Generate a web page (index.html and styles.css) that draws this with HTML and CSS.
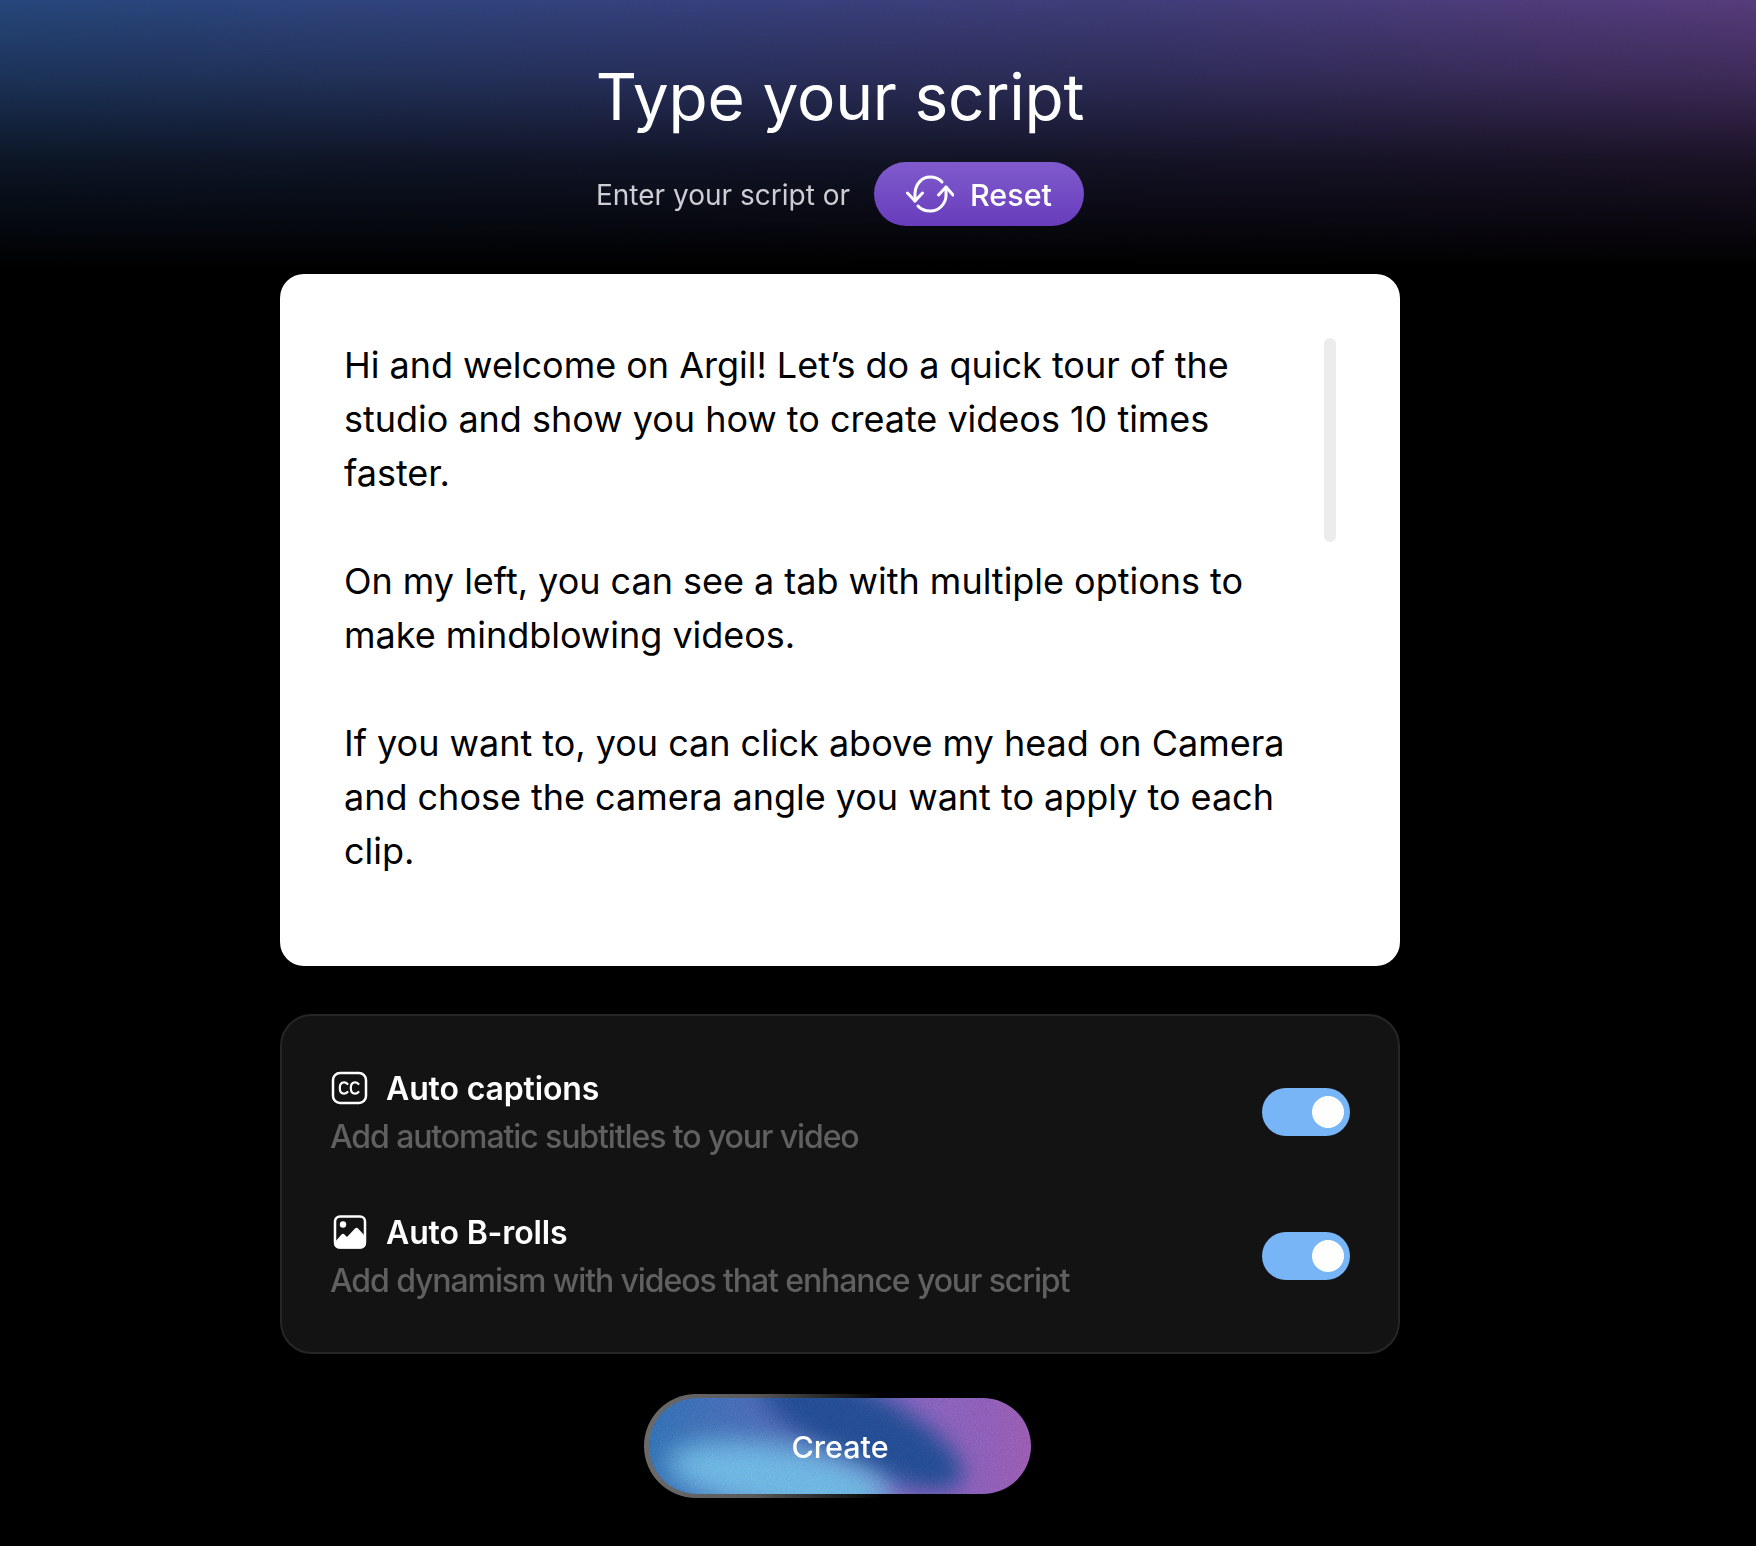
FILE: index.html
```html
<!DOCTYPE html>
<html lang="en">
<head>
<meta charset="utf-8">
<title>Type your script</title>
<link rel="stylesheet" href="styles.css">
</head>
<body>
<div class="glow">
  <svg class="glow-grain" width="100%" height="100%">
    <filter id="glownoise"><feTurbulence type="fractalNoise" baseFrequency="0.9" numOctaves="2" seed="9"/><feColorMatrix type="saturate" values="0"/></filter>
    <rect width="100%" height="100%" filter="url(#glownoise)"/>
  </svg>
</div>
<main class="page">
  <h1 class="title">Type your script</h1>
  <div class="sub">
    <span class="sub-text">Enter your script or</span>
    <button class="reset">
      <svg class="reset-icon" width="48" height="38" viewBox="0 0 48 38" fill="none" stroke="#fff" stroke-width="3" stroke-linecap="round" stroke-linejoin="round">
        <path d="M9 26V18C9.500 9 16 2 24 2C29 2 33 3.500 36 7"/>
        <path d="M1.500 18L9 26L16.500 18"/>
        <path d="M40 12V21C39.500 29 33 36 24.500 36C19.500 36 15 34.500 12 31"/>
        <path d="M32.500 20L40 12L47 20"/>
      </svg>
      <span>Reset</span>
    </button>
  </div>

  <section class="card">
    <div class="script">
      <p>Hi and welcome on Argil! Let’s do a quick tour of the studio and show you how to create videos 10 times faster.</p>
      <p>On my left, you can see a tab with multiple options to make mindblowing videos.</p>
      <p>If you want to, you can click above my head on Camera and chose the camera angle you want to apply to each clip.</p>
    </div>
    <div class="thumb"></div>
  </section>

  <section class="panel">
    <div class="row">
      <div class="row-text">
        <div class="row-title">
          <svg class="row-icon" width="38" height="34" viewBox="0 0 38 34" fill="none" stroke="#fff">
            <rect x="3" y="2" width="33" height="30" rx="7" stroke-width="2.500"/>
            <path d="M17.500 13C16.500 11.800 15.200 11.300 14 11.300C11.200 11.300 9.800 13.800 9.800 17C9.800 20.200 11.200 22.700 14 22.700C15.200 22.700 16.500 22.200 17.500 21M28.500 13C27.500 11.800 26.200 11.300 25 11.300C22.200 11.300 20.800 13.800 20.800 17C20.800 20.200 22.200 22.700 25 22.700C26.200 22.700 27.500 22.200 28.500 21" stroke-width="2.200" stroke-linecap="round"/>
          </svg>
          <span>Auto captions</span>
        </div>
        <div class="row-desc">Add automatic subtitles to your video</div>
      </div>
      <div class="toggle"><div class="knob"></div></div>
    </div>
    <div class="row">
      <div class="row-text">
        <div class="row-title">
          <svg class="row-icon" width="38" height="34" viewBox="-1 0 38 34" fill="none">
            <rect x="4" y="1.500" width="30" height="31" rx="5" stroke="#fff" stroke-width="2.500"/>
            <circle cx="12" cy="9.500" r="3.200" fill="#fff"/>
            <path d="M3 28L10.500 19.500C11.500 18.500 12.500 18.500 13.500 19.500L16 22L24 13.500C25 12.500 26 12.500 27 13.500L35 22V28C35 31 33 33.500 30 33.500H8C5 33.500 3 31 3 28Z" fill="#fff"/>
          </svg>
          <span>Auto B-rolls</span>
        </div>
        <div class="row-desc">Add dynamism with videos that enhance your script</div>
      </div>
      <div class="toggle"><div class="knob"></div></div>
    </div>
  </section>

  <button class="create">
    <span class="create-art">
      <span class="blob blob-dark"></span>
      <span class="blob blob-light"></span>
      <svg class="grain" width="100%" height="100%">
        <filter id="noise"><feTurbulence type="fractalNoise" baseFrequency="0.8" numOctaves="2" seed="4"/><feColorMatrix type="saturate" values="0"/></filter>
        <rect width="100%" height="100%" filter="url(#noise)"/>
      </svg>
    </span>
    <span class="create-label">Create</span>
  </button>
</main>
</body>
</html>
```

FILE: styles.css
```css
* { box-sizing: border-box; }

html, body {
  margin: 0;
  background: #000;
  color: #fff;
  font-family: Inter, "Liberation Sans", sans-serif;
}

body {
  position: relative;
  min-height: 1546px;
  overflow: hidden;
}

.glow {
  position: absolute;
  left: 0;
  right: 0;
  top: 0;
  height: 270px;
  background: linear-gradient(90deg, #254578 0%, #33407a 35%, #3e3b76 65%, #543a78 100%);
  -webkit-mask-image: linear-gradient(180deg, #000 0%, rgba(0,0,0,.72) 28%, rgba(0,0,0,.3) 60%, transparent 100%);
  mask-image: linear-gradient(180deg, #000 0%, rgba(0,0,0,.72) 28%, rgba(0,0,0,.3) 60%, transparent 100%);
}

.glow-grain {
  display: block;
  opacity: .1;
  mix-blend-mode: overlay;
}

.page {
  position: relative;
  z-index: 0;
  width: 1120px;
  margin-left: 280px;
  padding-top: 56px;
  display: flex;
  flex-direction: column;
  align-items: center;
}

.title {
  margin: 0;
  font-size: 64px;
  line-height: 82px;
  font-weight: 400;
  letter-spacing: -0.2px;
}

.sub {
  margin-top: 24px;
  height: 64px;
  display: flex;
  align-items: center;
  gap: 24px;
}

.sub-text {
  padding-top: 2px;
  font-size: 28px;
  color: #cdced4;
}

.reset {
  width: 210px;
  height: 64px;
  border: 0;
  border-radius: 32px;
  background: linear-gradient(180deg, #805bcd, #683cbc);
  color: #fff;
  font: 500 30.5px Inter, sans-serif;
  display: flex;
  align-items: center;
  padding: 0 0 0 32px;
  gap: 16px;
}

.card {
  position: relative;
  width: 1120px;
  height: 692px;
  margin-top: 48px;
  padding: 64px;
  background: #fff;
  border-radius: 24px;
  color: #000;
}

.script {
  width: 960px;
  font-size: 36px;
  line-height: 54px;
  letter-spacing: -0.02px;
}

.script p { margin: 0 0 54px; }

.thumb {
  position: absolute;
  top: 64px;
  right: 64px;
  width: 12px;
  height: 204px;
  border-radius: 6px;
  background: #ececec;
}

.panel {
  width: 1120px;
  margin-top: 48px;
  padding: 48px;
  background: #131313;
  border: 2px solid #262626;
  border-radius: 32px;
  display: flex;
  flex-direction: column;
  gap: 48px;
}

.row {
  height: 96px;
  display: flex;
  align-items: center;
  justify-content: space-between;
}

.row-title {
  height: 48px;
  display: flex;
  align-items: center;
  gap: 18px;
  font-size: 32px;
  font-weight: 600;
  letter-spacing: -0.15px;
}

.row-icon { display: block; }

.row-desc {
  height: 48px;
  line-height: 50px;
  font-size: 32px;
  font-weight: 500;
  letter-spacing: -1.1px;
  color: #606060;
}

.toggle {
  width: 88px;
  height: 48px;
  border-radius: 24px;
  background: #77b5f7;
  display: flex;
  align-items: center;
  justify-content: flex-end;
  padding-right: 6px;
}

.knob {
  width: 32px;
  height: 32px;
  border-radius: 50%;
  background: #fff;
}

.create {
  position: relative;
  width: 382px;
  height: 96px;
  margin-top: 44px;
  padding: 0;
  border: 0;
  border-radius: 48px;
  background: none;
  color: #fff;
  font: 500 30.5px Inter, sans-serif;
}

.create::before {
  content: "";
  position: absolute;
  inset: -4px 0 -4px -5px;
  z-index: -1;
  border-radius: 52px;
  background: linear-gradient(90deg, #6a6a6a 0%, #5a5a5a 28%, #000 62%);
}

.create-art {
  position: absolute;
  inset: 0;
  overflow: hidden;
  border-radius: 48px;
  background: linear-gradient(90deg, #2f68ad 0%, #3d66b0 16%, #4a62b0 34%, #7c5cb8 70%, #8458b2 88%, #9255ac 100%);
}

.blob {
  position: absolute;
  border-radius: 50%;
}

.blob-dark {
  left: 100px;
  top: -6px;
  width: 225px;
  height: 74px;
  background: #21478a;
  transform: rotate(27deg);
  filter: blur(11px);
}

.blob-light {
  left: 18px;
  top: 48px;
  width: 225px;
  height: 66px;
  background: #66b0e0;
  transform: rotate(9deg);
  filter: blur(13px);
}

.grain {
  position: absolute;
  inset: 0;
  opacity: .4;
  mix-blend-mode: overlay;
}

.create-label {
  position: relative;
}
```
